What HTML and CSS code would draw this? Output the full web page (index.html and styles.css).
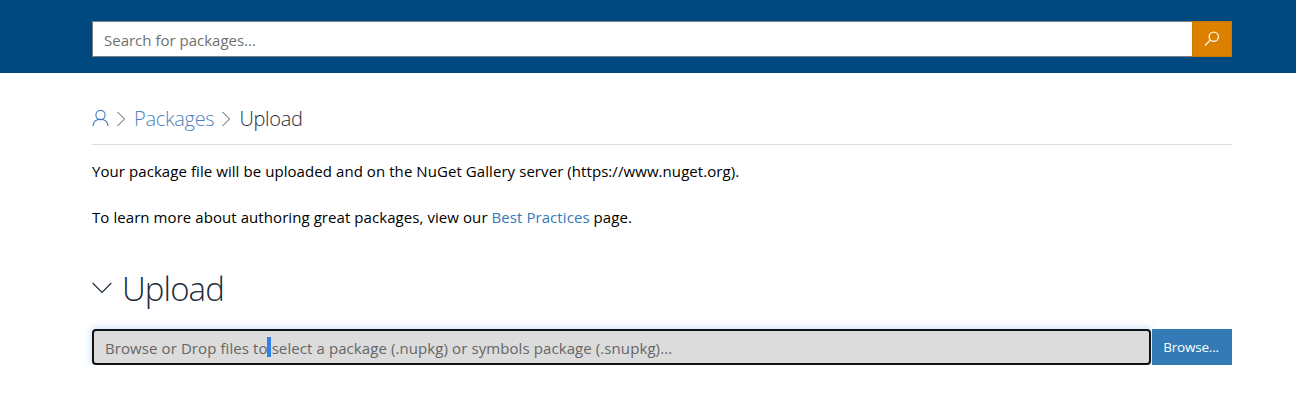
FILE: index.html
```html
<!DOCTYPE html>
<html lang="en">
<head>
<meta charset="utf-8">
<title>Upload Package</title>
<link rel="stylesheet" href="styles.css">
</head>
<body>
<header class="site-header">
  <form class="search">
    <input class="search-input" type="text" placeholder="Search for packages...">
    <button class="search-btn" type="button" aria-label="Search">
      <svg width="18" height="18" viewBox="0 0 18 18" fill="none" stroke="#fbeee0" stroke-width="1.4"><circle cx="10.800" cy="6.700" r="4.600"/><path d="M7.500 10 2 15.500"/></svg>
    </button>
  </form>
</header>
<main class="page">
  <nav class="crumbs">
    <svg class="crumb-user" width="18" height="20" viewBox="0 0 18 20" fill="none" stroke="#3f7cbd" stroke-width="1.1"><circle cx="8.500" cy="6" r="4.600"/><path d="M1 17c.4-4.400 3.400-6.700 7.500-6.700s7.100 2.300 7.500 6.700"/></svg>
    <svg class="crumb-sep" width="10" height="16" viewBox="0 0 10 16" fill="none" stroke="#44586c" stroke-width="1"><path d="M1.500 1 8.500 8 1.500 15"/></svg>
    <a class="crumb-link" href="#">Packages</a>
    <svg class="crumb-sep" width="10" height="16" viewBox="0 0 10 16" fill="none" stroke="#44586c" stroke-width="1"><path d="M1.500 1 8.500 8 1.500 15"/></svg>
    <span class="crumb-current">Upload</span>
  </nav>
  <p class="intro">Your package file will be uploaded and on the NuGet Gallery server (https://www.nuget.org).</p>
  <p class="intro">To learn more about authoring great packages, view our <a class="text-link" href="#">Best Practices</a> page.</p>
  <h2 class="section-title">
    <svg width="20" height="12" viewBox="0 0 20 12" fill="none" stroke="#1d2b3a" stroke-width="1.200"><path d="M.7 1 10 10.500 19.300 1"/></svg>
    <span>Upload</span>
  </h2>
  <div class="file-row">
    <div class="file-field">Browse or Drop files to<span class="caret"></span>select a package (.nupkg) or symbols package (.snupkg)...</div>
    <button class="browse-btn" type="button">Browse...</button>
  </div>
</main>
</body>
</html>
```

FILE: styles.css
```css
html, body {
  margin: 0;
  padding: 0;
  background: #fff;
  color: #000;
  font-family: "Open Sans", "Liberation Sans", sans-serif;
  font-size: 15px;
  overflow: hidden;
}
.site-header {
  height: 73px;
  box-sizing: border-box;
  padding: 21px 64px 0 92px;
  background: #004880;
}
.search {
  display: flex;
  height: 36px;
}
.search-input {
  flex: 1;
  min-width: 0;
  box-sizing: border-box;
  margin: 0;
  padding: 2px 11px 0;
  border: 1px solid #808080;
  border-right: 0;
  border-radius: 0;
  background: #fff;
  font: 15px "Open Sans", sans-serif;
  outline: 0;
}
.search-input::placeholder { color: #707070; opacity: 1; }
.search-btn {
  display: flex;
  align-items: center;
  justify-content: center;
  width: 40px;
  padding: 0;
  border: 1px solid #c87800;
  background: #dc8000;
}
.page {
  padding: 0 64px 0 92px;
}
.crumbs {
  display: flex;
  align-items: center;
  gap: 7px;
  height: 51px;
  margin-top: 20px;
  border-bottom: 1px solid #ddd;
  font-size: 20px;
  font-weight: 300;
  letter-spacing: -0.3px;
}
.crumb-link { margin-left: 1px; color: #4f82bd; text-decoration: none; }
.crumb-current { margin-left: 1px; color: #1d2b3a; }
.crumb-user { margin-right: -1px; }
.intro {
  margin: 0 0 22px;
  line-height: 24px;
  letter-spacing: 0.07px;
}
.crumbs + .intro { margin-top: 14px; }
.text-link { color: #337ab7; text-decoration: none; }
.section-title {
  display: flex;
  align-items: center;
  gap: 10px;
  margin: 36px 0 0;
  height: 46px;
  font-size: 33px;
  font-weight: 300;
  letter-spacing: -0.9px;
  color: #1d2b3a;
}
.file-row {
  display: flex;
  height: 36px;
  margin-top: 18px;
}
.file-field {
  flex: 1;
  display: flex;
  align-items: center;
  box-sizing: border-box;
  padding: 2px 10px 0 11px;
  border: 2px solid #111;
  border-radius: 4px;
  background: #dcdcdc;
  color: #666;
  font-size: 15px;
  letter-spacing: 0.09px;
  white-space: pre;
  box-shadow: 0 0 6px 2px rgba(110, 175, 245, 0.3);
}
.caret {
  display: inline-block;
  width: 4px;
  height: 20px;
  margin: -2px 1px 0 -1px;
  background: #2f80ed;
}
.browse-btn {
  width: 80px;
  margin-left: 1px;
  padding: 0 2px 0 0;
  border: 0;
  background: #337ab7;
  color: #fff;
  font: 13.500px "Open Sans", sans-serif;
  letter-spacing: -0.2px;
}
```
